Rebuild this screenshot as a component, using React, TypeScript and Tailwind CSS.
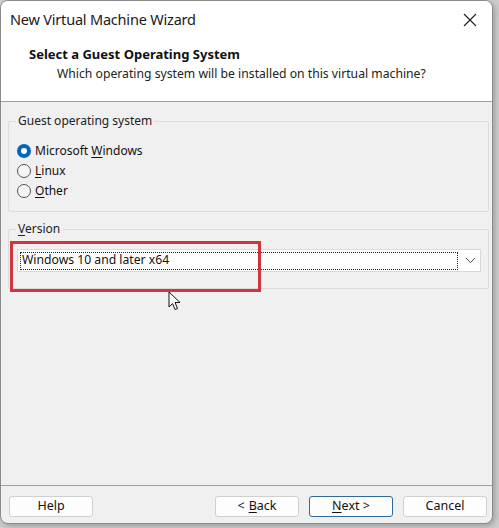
import React from 'react';

const font = { fontFamily: '"Noto Sans", "Open Sans", Arial, sans-serif' };

const Radio = ({ checked, label, u, rest }: { checked?: boolean; label?: string; u: string; rest: string }) => (
  <div className="flex items-center h-5">
    {checked ? (
      <span className="w-[14px] h-[14px] rounded-full bg-[#0067c0] flex items-center justify-center">
        <span className="w-[6px] h-[6px] rounded-full bg-white" />
      </span>
    ) : (
      <span className="w-[14px] h-[14px] rounded-full border border-[#555] bg-[#f5f5f5]" />
    )}
    <span className="ml-[4px] text-[12px] text-[#111]">
      {label}
      <span className="underline underline-offset-2">{u}</span>
      {rest}
    </span>
  </div>
);

const Btn = ({ children, primary }: { children: React.ReactNode; primary?: boolean }) => (
  <button
    className={
      'w-[84px] h-[21px] rounded-[3px] bg-[#fdfdfd] text-[12.5px] text-[#111] flex items-center justify-center border ' +
      (primary ? 'border-[#2f6a9a]' : 'border-[#d0d0d0]')
    }
  >
    {children}
  </button>
);

export default function App() {
  return (
    <div className="w-[499px] h-[528px] bg-[#cfcfcf] overflow-hidden" style={font}>
      <div className="w-[493px] h-[524px] rounded-[8px] border border-[#8a8a8a] bg-[#f0f0f0] overflow-hidden flex flex-col shadow-[2px_2px_6px_rgba(0,0,0,0.25)]">
        {/* header */}
        <div className="bg-white h-[101px] border-b border-[#a0a0a0]">
          <div className="flex items-center justify-between h-[38px] pl-[9px] pr-[12px]">
            <span className="text-[14.5px] text-[#1a1a1a] tracking-[-0.2px]">New Virtual Machine Wizard</span>
            <svg width="16" height="16" viewBox="0 0 16 16" className="mr-[2px]">
              <path d="M2 2 L14 14 M14 2 L2 14" stroke="#222" strokeWidth="1.2" />
            </svg>
          </div>
          <div className="pl-[28px] text-[13px] font-bold text-[#111] leading-[16px] mt-[7px]">
            Select a Guest Operating System
          </div>
          <div className="pl-[56px] text-[12.2px] text-[#222] leading-[16px] mt-[4px]">
            Which operating system will be installed on this virtual machine?
          </div>
        </div>

        {/* body */}
        <div className="flex-1 pl-[7px] pr-[3px] pt-[10px]">
          <fieldset className="border border-[#dcdcdc] rounded-[2px] px-[8px] pb-[10px] pt-[11px]">
            <legend className="px-[2px] ml-[-1px] text-[12px] text-[#222]">Guest operating system</legend>
            <div className="flex flex-col">
              <Radio checked label="Microsoft " u="W" rest="indows" />
              <Radio u="L" rest="inux" />
              <Radio u="O" rest="ther" />
            </div>
          </fieldset>

          <fieldset className="mt-[8px] border border-[#dcdcdc] rounded-[2px] pl-[8px] pr-[7px] pb-[16px] pt-[11px]">
            <legend className="px-[2px] ml-[-1px] text-[12px] text-[#222]">
              <span className="underline underline-offset-2">V</span>ersion
            </legend>
            <div className="relative">
              <div className="h-[23px] bg-white border border-[#d8d8d8] flex items-center pl-[2px] pr-[4px]">
                <div className="flex-1 h-[18px] border border-dotted border-[#222] flex items-center pl-[1px] text-[12.2px] text-[#111]">
                  Windows 10 and later x64
                </div>
                <svg width="11" height="7" viewBox="0 0 11 7" className="ml-[7px]">
                  <path d="M1 1 L5.5 5.5 L10 1" stroke="#555" strokeWidth="1" fill="none" />
                </svg>
              </div>
              <div className="absolute left-[-7px] top-[-8px] w-[251px] h-[51px] border-[3px] border-[#d1343e]" />
              <svg width="14" height="20" viewBox="0 0 14 20" className="absolute left-[151px] top-[42px]">
                <path d="M1 1 L1 16 L4.5 12.5 L7 18.5 L9.5 17.5 L7 11.5 L12 11.5 Z" fill="white" stroke="#111" strokeWidth="1" strokeLinejoin="round" />
              </svg>
            </div>
          </fieldset>
        </div>

        {/* footer */}
        <div className="h-[38px] border-t border-[#a0a0a0] flex items-start pt-[10px] pl-[8px] pr-[5px]">
          <Btn>Help</Btn>
          <div className="flex-1" />
          <div className="flex gap-[10px]">
            <Btn>
              &lt; <span className="underline underline-offset-2 ml-[4px]">B</span>ack
            </Btn>
            <Btn primary>
              <span className="underline underline-offset-2">N</span>ext &gt;
            </Btn>
            <Btn>Cancel</Btn>
          </div>
        </div>
      </div>
    </div>
  );
}
